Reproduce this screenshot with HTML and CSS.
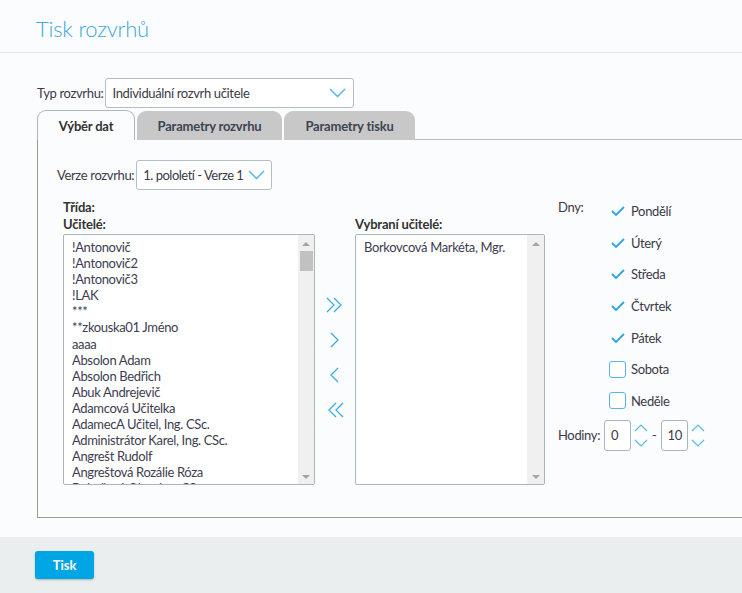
FILE: index.html
```html
<!DOCTYPE html>
<html lang="cs">
<head>
<meta charset="utf-8">
<title>Tisk rozvrhů</title>
<link rel="stylesheet" href="styles.css">
</head>
<body>
<header class="page-head"><h1 class="title">Tisk rozvrhů</h1></header>
<main class="content">
  <div class="type-row">
    <span class="lbl">Typ rozvrhu:</span>
    <div class="select select-type">
      <span>Individuální rozvrh učitele</span>
      <svg class="chev" width="17" height="10" viewBox="0 0 17 10"><path d="M1 1 L8.5 8.5 L16 1" fill="none" stroke="#45b3e6" stroke-width="1.3"/></svg>
    </div>
  </div>
  <div class="tabs">
    <div class="tab active">Výběr dat</div>
    <div class="tab tab-2">Parametry rozvrhu</div>
    <div class="tab tab-3">Parametry tisku</div>
    <div class="tab-line"></div>
  </div>
  <section class="panel">
    <div class="verze-row">
      <span class="lbl">Verze rozvrhu:</span>
      <div class="select select-verze">
        <span>1. pololetí - Verze 1</span>
        <svg class="chev" width="17" height="10" viewBox="0 0 17 10"><path d="M1 1 L8.5 8.5 L16 1" fill="none" stroke="#45b3e6" stroke-width="1.3"/></svg>
      </div>
    </div>
    <div class="body">
      <div class="col-left">
        <div class="blabel">Třída:</div>
        <div class="blabel">Učitelé:</div>
        <div class="listbox list-left">
          <div class="items">
            <div>!Antonovič</div>
            <div>!Antonovič2</div>
            <div>!Antonovič3</div>
            <div>!LAK</div>
            <div>***</div>
            <div>**zkouska01 Jméno</div>
            <div>aaaa</div>
            <div>Absolon Adam</div>
            <div>Absolon Bedřich</div>
            <div>Abuk Andrejevič</div>
            <div>Adamcová Učitelka</div>
            <div>AdamecA Učitel, Ing. CSc.</div>
            <div>Administrátor Karel, Ing. CSc.</div>
            <div>Angrešt Rudolf</div>
            <div>Angreštová Rozálie Róza</div>
            <div>Bohačová Olga, Ing. CSc.</div>
          </div>
          <div class="sbar">
            <span class="tri-up"></span>
            <span class="thumb"></span>
            <span class="grow"></span>
            <span class="tri-down"></span>
          </div>
        </div>
      </div>
      <div class="col-arrows">
        <svg width="20" height="16" viewBox="0 0 20 16"><path d="M2 1 L9 8 L2 15 M9 1 L16 8 L9 15" fill="none" stroke="#3aaee4" stroke-width="1.3"/></svg>
        <svg width="20" height="16" viewBox="0 0 20 16"><path d="M6 1 L13 8 L6 15" fill="none" stroke="#3aaee4" stroke-width="1.3"/></svg>
        <svg width="20" height="16" viewBox="0 0 20 16"><path d="M13 1 L6 8 L13 15" fill="none" stroke="#3aaee4" stroke-width="1.3"/></svg>
        <svg width="20" height="16" viewBox="0 0 20 16"><path d="M11 1 L4 8 L11 15 M18 1 L11 8 L18 15" fill="none" stroke="#3aaee4" stroke-width="1.3"/></svg>
      </div>
      <div class="col-right">
        <div class="blabel spacer"></div>
        <div class="blabel">Vybraní učitelé:</div>
        <div class="listbox list-right">
          <div class="items"><div>Borkovcová Markéta, Mgr.</div></div>
          <div class="sbar">
            <span class="tri-up"></span>
            <span class="grow"></span>
            <span class="tri-down"></span>
          </div>
        </div>
      </div>
      <div class="col-days">
        <div class="days">
          <span class="lbl dny">Dny:</span>
          <ul class="checks">
            <li><span class="ck on"><svg width="16" height="12" viewBox="0 0 16 12"><path d="M2 6 L6 10 L14 2" fill="none" stroke="#2aa6e2" stroke-width="1.8"/></svg></span>Pondělí</li>
            <li><span class="ck on"><svg width="16" height="12" viewBox="0 0 16 12"><path d="M2 6 L6 10 L14 2" fill="none" stroke="#2aa6e2" stroke-width="1.8"/></svg></span>Úterý</li>
            <li><span class="ck on"><svg width="16" height="12" viewBox="0 0 16 12"><path d="M2 6 L6 10 L14 2" fill="none" stroke="#2aa6e2" stroke-width="1.8"/></svg></span>Středa</li>
            <li><span class="ck on"><svg width="16" height="12" viewBox="0 0 16 12"><path d="M2 6 L6 10 L14 2" fill="none" stroke="#2aa6e2" stroke-width="1.8"/></svg></span>Čtvrtek</li>
            <li><span class="ck on"><svg width="16" height="12" viewBox="0 0 16 12"><path d="M2 6 L6 10 L14 2" fill="none" stroke="#2aa6e2" stroke-width="1.8"/></svg></span>Pátek</li>
            <li><span class="ck box"></span>Sobota</li>
            <li><span class="ck box"></span>Neděle</li>
          </ul>
        </div>
        <div class="hours">
          <span class="lbl">Hodiny:</span>
          <div class="num">0</div>
          <div class="spin">
            <svg width="14" height="8" viewBox="0 0 14 8"><path d="M1 7 L7 1 L13 7" fill="none" stroke="#5bbbe8" stroke-width="1.2"/></svg>
            <svg width="14" height="8" viewBox="0 0 14 8"><path d="M1 1 L7 7 L13 1" fill="none" stroke="#5bbbe8" stroke-width="1.2"/></svg>
          </div>
          <span class="dash">-</span>
          <div class="num">10</div>
          <div class="spin">
            <svg width="14" height="8" viewBox="0 0 14 8"><path d="M1 7 L7 1 L13 7" fill="none" stroke="#5bbbe8" stroke-width="1.2"/></svg>
            <svg width="14" height="8" viewBox="0 0 14 8"><path d="M1 1 L7 7 L13 1" fill="none" stroke="#5bbbe8" stroke-width="1.2"/></svg>
          </div>
        </div>
      </div>
    </div>
  </section>
</main>
<footer class="foot"><button class="btn">Tisk</button></footer>
</body>
</html>
```
FILE: styles.css
```css
* { box-sizing: border-box; }
html, body { margin: 0; padding: 0; }
body {
  width: 742px;
  height: 593px;
  overflow: hidden;
  background: #fbfcfd;
  font-family: Lato, "Open Sans", sans-serif;
  font-size: 13px;
  letter-spacing: -0.35px;
  color: #3a3a48;
}
.page-head {
  height: 53px;
  border-bottom: 1px solid #e4e8ea;
  padding: 15px 0 0 36px;
}
.title {
  margin: 0;
  font-size: 22px;
  font-weight: 300;
  color: #3aa8dd;
  line-height: 28px;
  letter-spacing: -0.2px;
}
.content { padding: 25px 0 0 37px; }
.type-row { display: flex; align-items: center; gap: 2px; }
.lbl { white-space: nowrap; }
.select {
  display: flex;
  align-items: center;
  justify-content: space-between;
  height: 30px;
  border: 1px solid #b2bdc4;
  border-radius: 3px;
  background: #fff;
  padding: 0 7px 0 6px;
  white-space: nowrap;
}
.select-type { width: 249px; }
.select-verze { width: 136px; padding-right: 6px; letter-spacing: -0.5px; }
.tabs {
  display: flex;
  align-items: flex-end;
  margin-top: 3px;
  height: 29px;
}
.tab {
  height: 29px;
  border-radius: 9px 9px 0 0;
  background: #c8c8c8;
  font-weight: 700;
  color: #3d4550;
  display: flex;
  align-items: center;
  justify-content: center;
  margin-right: 2px;
  letter-spacing: -0.2px;
}
.tab.active {
  width: 98px;
  background: #fbfcfd;
  border: 1px solid #aab5bc;
  border-bottom: none;
  color: #333;
  height: 30px;
}
.tab-2 { width: 145px; }
.tab-3 { width: 131px; margin-right: 0; }
.tab-line { flex: 1; border-bottom: 1px solid #b5bec4; height: 1px; }
.panel {
  width: 720px;
  height: 378px;
  border-left: 1px solid #9c9c86;
  border-bottom: 1px solid #9c9c86;
  padding: 20px 0 0 19px;
}
.verze-row { display: flex; align-items: center; gap: 2px; }
.body { display: flex; margin-top: 9px; padding-left: 6px; }
.blabel { font-weight: 700; height: 17px; line-height: 17px; color: #333; letter-spacing: -0.2px; }
.spacer { visibility: hidden; }
.col-left { width: 252px; }
.col-right { width: 190px; }
.listbox {
  margin-top: 1px;
  height: 251px;
  border: 1px solid #aab5bd;
  border-radius: 2px;
  background: #fff;
  display: flex;
  overflow: hidden;
}
.items {
  flex: 1;
  padding: 4px 0 0 8px;
  line-height: 16.1px;
  overflow: hidden;
  white-space: nowrap;
  color: #3d3d4f;
}
.sbar {
  width: 16px;
  background: #f0f0f0;
  display: flex;
  flex-direction: column;
  align-items: center;
  padding: 7px 0 5px;
}
.list-right .sbar { width: 17px; }
.tri-up, .tri-down {
  width: 0; height: 0;
  border-left: 4px solid transparent;
  border-right: 4px solid transparent;
}
.tri-up { border-bottom: 4px solid #a3a3a3; }
.tri-down { border-top: 4px solid #a3a3a3; }
.thumb { width: 13px; height: 20px; background: #c1c1c1; margin-top: 5px; }
.grow { flex: 1; }
.col-arrows {
  width: 40px;
  display: flex;
  flex-direction: column;
  align-items: center;
  padding-top: 98px;
  gap: 19px;
}
.col-arrows svg { display: block; }
.col-days { padding-left: 13px; }
.days { display: flex; }
.dny { width: 51px; line-height: 17px; }
.checks { list-style: none; margin: -4px 0 0; padding: 0; }
.checks li {
  display: flex;
  align-items: center;
  height: 31.7px;
}
.ck {
  width: 17px;
  height: 17px;
  margin-right: 5px;
  display: flex;
  align-items: center;
  justify-content: center;
}
.ck.box {
  border: 1px solid #55b6e6;
  border-radius: 3px;
  background: #fff;
}
.hours { display: flex; align-items: center; margin-top: 3px; }
.hours .lbl { margin-right: 4px; }
.num {
  width: 27px;
  height: 31px;
  border: 1px solid #aab5bd;
  border-radius: 3px;
  background: #fff;
  padding: 6px 0 0 6px;
  line-height: 16px;
}
.spin {
  display: flex;
  flex-direction: column;
  gap: 7px;
  margin: 0 2px 0 3px;
}
.spin svg { display: block; }
.dash { margin: 0 4px 0 2px; }
.foot {
  margin-top: 19px;
  height: 60px;
  background: #eaeeef;
  padding: 14px 0 0 35px;
}
.btn {
  width: 59px;
  height: 28px;
  border: none;
  border-radius: 3px;
  background: #00a5e3;
  color: #fff;
  font-family: Lato, sans-serif;
  font-weight: 700;
  font-size: 13px;
  box-shadow: 0 1px 2px rgba(0,0,0,0.25);
  padding: 0;
}
```
